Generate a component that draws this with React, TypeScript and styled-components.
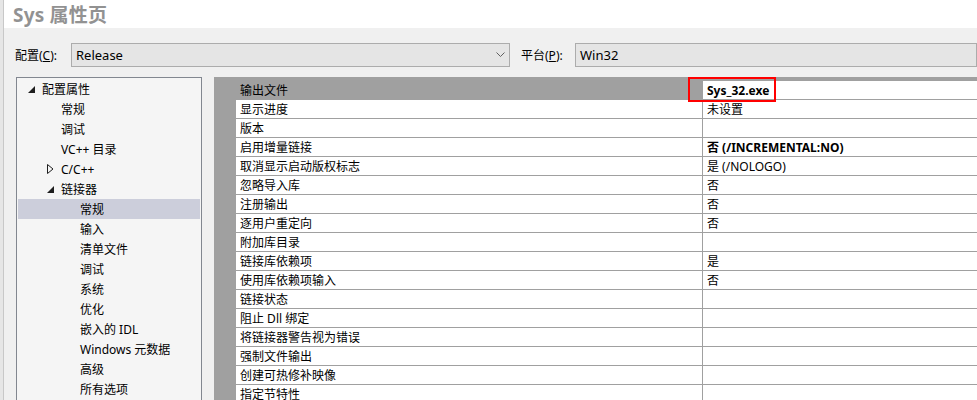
import React from 'react';
import styled, { createGlobalStyle } from 'styled-components';

const GlobalStyle = createGlobalStyle`
  html, body {
    margin: 0;
    padding: 0;
    background: #f0f0f0;
    overflow: hidden;
  }
  body {
    font-family: "Noto Sans", "Noto Sans CJK SC", sans-serif;
    font-size: 12px;
    color: #000;
  }
`;

const FONT = `"Noto Sans", "Noto Sans CJK SC", sans-serif`;

const Window = styled.div`
  width: 977px;
  height: 400px;
  display: flex;
  overflow: hidden;
  background: #f0f0f0;
`;

const EdgeStrip = styled.div`
  width: 3px;
  flex: none;
  background: #e6e6e6;
  border-right: 1px solid #c8c8c8;
`;

const Dialog = styled.div`
  flex: 1;
  display: flex;
  flex-direction: column;
  min-width: 0;
`;

const TitleBar = styled.div`
  height: 28px;
  background: #ffffff;
  display: flex;
  align-items: center;
  padding-left: 9px;
  font-family: "Noto Sans", "Noto Sans CJK SC", sans-serif;
  font-size: 19px;
  font-weight: 700;
  color: #929292;
  letter-spacing: 0.2px;
`;

const ConfigRow = styled.div`
  display: flex;
  align-items: center;
  height: 24px;
  margin-top: 15px;
  padding-left: 11px;
`;

const Label = styled.span<{ $width: number }>`
  width: ${p => p.$width}px;
  flex: none;
  font-size: 12px;
  font-family: ${FONT};

  u {
    text-decoration: underline;
  }
`;

const Combo = styled.div<{ $width?: number }>`
  height: 24px;
  box-sizing: border-box;
  ${p => (p.$width ? `width: ${p.$width}px; flex: none;` : 'flex: 1;')}
  background: #e5e5e5;
  border: 1px solid #acacac;
  display: flex;
  align-items: center;
  padding-left: 4px;
  font-size: 13px;
  font-family: ${FONT};
`;

const ComboText = styled.span`
  flex: 1;
`;

const Chevron = styled.span`
  width: 18px;
  display: flex;
  justify-content: center;
  color: #606060;
`;

const Gap = styled.span<{ $w: number }>`
  width: ${p => p.$w}px;
  flex: none;
`;

const Main = styled.div`
  display: flex;
  margin-top: 10px;
  padding-left: 12px;
  flex: 1;
  min-height: 0;
`;

const Tree = styled.div`
  width: 186px;
  flex: none;
  box-sizing: border-box;
  background: #f5f5f5;
  border: 1px solid #828790;
  border-bottom: none;
  padding: 1px;
  margin-right: 12px;
`;

const TreeItem = styled.div<{ $level: number; $selected?: boolean }>`
  height: 20px;
  display: flex;
  align-items: center;
  padding-left: ${p => 10 + p.$level * 19}px;
  background: ${p => (p.$selected ? '#cccedb' : 'transparent')};
  font-size: 12px;
  font-family: ${FONT};
  white-space: nowrap;
`;

const Toggle = styled.span`
  width: 11px;
  height: 20px;
  flex: none;
  display: flex;
  align-items: center;
  margin-right: 3px;
`;

const Grid = styled.div`
  flex: 1;
  background: #a0a0a0;
  padding-top: 3px;
  position: relative;
  min-width: 0;
`;

const Row = styled.div`
  height: 19px;
  display: grid;
  grid-template-columns: 22px 466px 1fr;
`;

const Gutter = styled.div`
  background: #a0a0a0;
`;

const NameCell = styled.div<{ $selected?: boolean }>`
  background: ${p => (p.$selected ? '#a0a0a0' : '#ffffff')};
  border-top: 1px solid ${p => (p.$selected ? 'transparent' : '#a0a0a0')};
  padding-left: 4px;
  display: flex;
  align-items: center;
  font-size: 12px;
  font-family: ${FONT};
  white-space: nowrap;
`;

const ValueCell = styled.div<{ $bold?: boolean }>`
  background: #ffffff;
  border-top: 1px solid #a0a0a0;
  border-left: 1px solid #a0a0a0;
  padding-left: 4px;
  display: flex;
  align-items: center;
  font-size: 12px;
  font-family: ${FONT};
  font-weight: ${p => (p.$bold ? 700 : 400)};
  white-space: nowrap;
`;

const Highlight = styled.div`
  position: absolute;
  left: 474px;
  top: 0;
  width: 88px;
  height: 25px;
  box-sizing: border-box;
  border: 2px solid #ff0000;
  pointer-events: none;
`;

const ExpandedArrow = () => (
  <svg width="7" height="7" viewBox="0 0 7 7">
    <polygon points="7,0 7,7 0,7" fill="#1e1e1e" />
  </svg>
);

const CollapsedArrow = () => (
  <svg width="7" height="10" viewBox="0 0 7 10">
    <polygon points="0.5,0.5 6,5 0.5,9.5" fill="none" stroke="#1e1e1e" strokeWidth="1" />
  </svg>
);

const ChevronDown = () => (
  <svg width="9" height="6" viewBox="0 0 9 6">
    <polyline points="0.5,0.5 4.5,4.5 8.5,0.5" fill="none" stroke="#606060" strokeWidth="1" />
  </svg>
);

type TreeNode = { label: string; level: number; toggle?: 'open' | 'closed'; selected?: boolean };

const treeNodes: TreeNode[] = [
  { label: '配置属性', level: 0, toggle: 'open' },
  { label: '常规', level: 1 },
  { label: '调试', level: 1 },
  { label: 'VC++ 目录', level: 1 },
  { label: 'C/C++', level: 1, toggle: 'closed' },
  { label: '链接器', level: 1, toggle: 'open' },
  { label: '常规', level: 2, selected: true },
  { label: '输入', level: 2 },
  { label: '清单文件', level: 2 },
  { label: '调试', level: 2 },
  { label: '系统', level: 2 },
  { label: '优化', level: 2 },
  { label: '嵌入的 IDL', level: 2 },
  { label: 'Windows 元数据', level: 2 },
  { label: '高级', level: 2 },
  { label: '所有选项', level: 2 },
];

type Prop = { name: string; value?: string; bold?: boolean };

const properties: Prop[] = [
  { name: '输出文件', value: 'Sys_32.exe', bold: true },
  { name: '显示进度', value: '未设置' },
  { name: '版本' },
  { name: '启用增量链接', value: '否 (/INCREMENTAL:NO)', bold: true },
  { name: '取消显示启动版权标志', value: '是 (/NOLOGO)' },
  { name: '忽略导入库', value: '否' },
  { name: '注册输出', value: '否' },
  { name: '逐用户重定向', value: '否' },
  { name: '附加库目录' },
  { name: '链接库依赖项', value: '是' },
  { name: '使用库依赖项输入', value: '否' },
  { name: '链接状态' },
  { name: '阻止 Dll 绑定' },
  { name: '将链接器警告视为错误' },
  { name: '强制文件输出' },
  { name: '创建可热修补映像' },
  { name: '指定节特性' },
];

export default function App() {
  return (
    <>
      <GlobalStyle />
      <Window>
        <EdgeStrip />
        <Dialog>
          <TitleBar>Sys 属性页</TitleBar>
          <ConfigRow>
            <Label $width={56}>
              配置(<u>C</u>):
            </Label>
            <Combo $width={439}>
              <ComboText>Release</ComboText>
              <Chevron>
                <ChevronDown />
              </Chevron>
            </Combo>
            <Gap $w={11} />
            <Label $width={54}>
              平台(<u>P</u>):
            </Label>
            <Combo>
              <ComboText>Win32</ComboText>
            </Combo>
          </ConfigRow>
          <Main>
            <Tree>
              {treeNodes.map((n, i) => (
                <TreeItem key={i} $level={n.level} $selected={n.selected}>
                  <Toggle>
                    {n.toggle === 'open' && <ExpandedArrow />}
                    {n.toggle === 'closed' && <CollapsedArrow />}
                  </Toggle>
                  {n.label}
                </TreeItem>
              ))}
            </Tree>
            <Grid>
              {properties.map((p, i) => (
                <Row key={i}>
                  <Gutter />
                  <NameCell $selected={i === 0}>{p.name}</NameCell>
                  <ValueCell $bold={p.bold}>{p.value ?? ''}</ValueCell>
                </Row>
              ))}
              <Highlight />
            </Grid>
          </Main>
        </Dialog>
      </Window>
    </>
  );
}
